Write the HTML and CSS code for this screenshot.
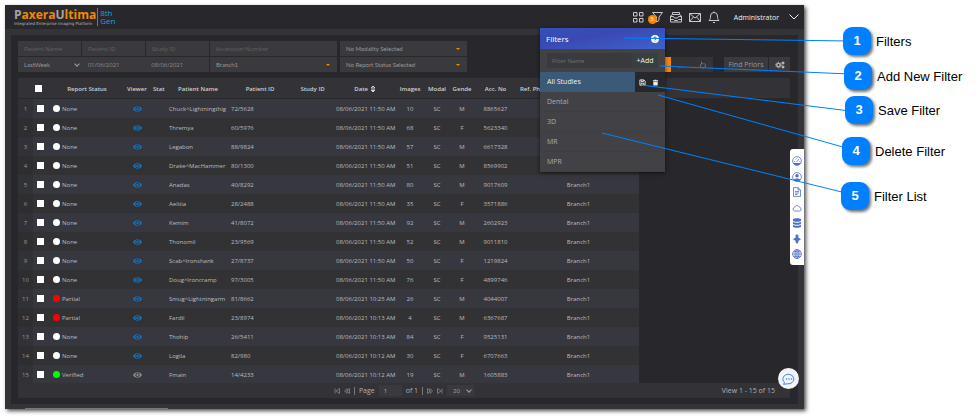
FILE: index.html
```html
<!DOCTYPE html>
<html lang="en">

<head>
  <meta charset="UTF-8">
  <meta name="viewport" content="width=device-width, initial-scale=1.0">
  <title>PaxeraUltima - Filters</title>

  <link rel="stylesheet" href="styles.css">
</head>

<body>
  <div class="app">
    <header class="topbar">
      <div class="logo">
        <div class="logo-main">
          <div class="logo-name"><i>P</i>axera<i>U</i>ltima</div>
          <div class="logo-sub">Integrated Enterprise Imaging Platform</div>
        </div>
        <div class="logo-gen">8th<br>Gen</div>
      </div>
      <nav class="top-icons">
        <button class="icon-btn" aria-label="Apps"><svg viewBox="0 0 12 12"><path d="M1.500 1.500h3.500v3.500h-3.500zM7.500 1.500h3.500v3.500h-3.500zM1.500 7.500h3.500v3.500h-3.500zM7.500 7.500h3.500v3.500h-3.500z" /></svg></button>
        <button class="icon-btn" aria-label="Filters"><svg viewBox="0 0 12 12"><path d="M1.500 1.500h10L8 6v3.500L5.500 11V6z" /></svg><span class="badge">5</span></button>
        <button class="icon-btn" aria-label="Worklist"><svg viewBox="0 0 12 12"><path d="M.5 5l2-1.500V1.500h7v2l2 1.500v6H.5zM.5 5.500h3l1 1.500h3l1-1.500h3M.5 8.500h3l1 1h3l1-1h3M2.500 3.500h7" /></svg></button>
        <button class="icon-btn" aria-label="Messages"><svg viewBox="0 0 12 12"><path d="M.5 2.500h11v8H.5zM.5 2.500L6 7l5.500-4.500M.5 10.500l4-4.500M11.500 10.500l-4-4.500" /></svg></button>
        <button class="icon-btn" aria-label="Notifications"><svg viewBox="0 0 12 12"><path d="M1 9.500h10C9.500 8 9.500 7 9.500 5a3.500 3.500 0 0 0-7 0C2.500 7 2.500 8 1 9.500zM5 11.500h2M6 .5v1" /></svg></button>
      </nav>
      <button class="user">Administrator
        <svg viewBox="0 0 10 6"><path d="M.5.5L5 5 9.500.5" /></svg>
      </button>
    </header>

    <main class="panel">
      <div class="tools">
        <form class="search">
          <input aria-label="Patient Name" placeholder="Patient Name">
          <input aria-label="Patient ID" placeholder="Patient ID">
          <input aria-label="Study ID" placeholder="Study ID">
          <input aria-label="Accession Number" placeholder="Accession Number">
          <div class="pick wide"><select aria-label="Modality"><option>No Modality Selected</option></select></div>
          <div class="range">
            <div class="pick chevron"><select aria-label="Period"><option>LastWeek</option></select></div>
            <input aria-label="From date" value="01/06/2021">
            <input aria-label="To date" value="08/06/2021">
          </div>
          <div class="pick"><select aria-label="Branch"><option>Branch1</option></select></div>
          <div class="pick wide"><select aria-label="Report status"><option>No Report Status Selected</option></select></div>
        </form>
        <div class="actions">
          <button class="act orange" aria-label="Search"></button>
          <button class="act dim">...</button>
          <button class="act dim" aria-label="Refresh"><svg viewBox="0 0 8 8"><path d="M2.500 2.500a2.500 2.500 0 1 0 3 0M2.500.8v2h2" /></svg></button>
          <button class="act priors">Find Priors</button>
          <button class="act" aria-label="Settings"><svg class="gears" viewBox="0 0 10 8"><circle cx="3.500" cy="4" r="1.700" /><circle class="teeth" cx="3.500" cy="4" r="2.700" /><circle cx="8" cy="2" r="1" /><circle cx="8" cy="6" r="1" /></svg></button>
        </div>
      </div>

      <section class="grid">
        <div class="grid-body">
          <table>
            <colgroup>
              <col class="w-num"><col class="w-check"><col class="w-status"><col class="w-viewer"><col class="w-stat">
              <col class="w-name"><col class="w-pid"><col class="w-sid"><col class="w-date"><col class="w-images">
              <col class="w-modal"><col class="w-gender"><col class="w-acc"><col class="w-ref"><col class="w-branch"><col class="w-last">
            </colgroup>
            <thead>
              <tr>
                <th></th>
                <th><input type="checkbox" aria-label="Select all"></th>
                <th>Report Status</th>
                <th class="cut">Viewer</th>
                <th class="cut">Stat</th>
                <th>Patient Name</th>
                <th>Patient ID</th>
                <th>Study ID</th>
                <th>Date <svg class="sort" viewBox="0 0 6 8"><path d="M1 3l2-2 2 2z" /><path class="on" d="M1 5l2 2 2-2z" /></svg></th>
                <th>Images</th>
                <th>Modal</th>
                <th>Gende</th>
                <th>Acc. No</th>
                <th class="cut">Ref. Phys</th>
                <th></th>
                <th></th>
              </tr>
            </thead>
            <tbody id="rows"></tbody>
          </table>
        </div>
        <footer class="pager">
          <div class="pages">
            <button aria-label="First page"><svg viewBox="0 0 6 6"><path d="M1 .5v5M5.500.5L2 3l3.500 2.500z" /></svg></button>
            <button aria-label="Previous page"><svg viewBox="0 0 6 6"><path d="M3 .5L.5 3 3 5.500zM5.500.5L3 3l2.500 2.500z" /></svg></button>
            <span class="bar"></span>
            <label for="page">Page</label>
            <input id="page" value="1">
            <span>of 1</span>
            <span class="bar"></span>
            <button aria-label="Next page"><svg viewBox="0 0 6 6"><path d="M.5.5L3 3 .5 5.500zM3 .5L5.500 3 3 5.500z" /></svg></button>
            <button aria-label="Last page"><svg viewBox="0 0 6 6"><path d="M5 .5v5M.5.5L4 3 .5 5.500z" /></svg></button>
            <div class="pick chevron size"><select aria-label="Rows per page"><option>20</option></select></div>
          </div>
          <div class="view">View 1 - 15 of 15</div>
        </footer>
      </section>
    </main>
    <div class="scroll"></div>

    <aside class="filters">
      <div class="filters-head">
        <h2>Filters</h2>
        <button aria-label="Help"><svg viewBox="0 0 8 8"><circle cx="4" cy="4" r="4" /><path d="M2.800 3.200a1.200 1.200 0 1 1 1.600 1.100L4 5M4 5.700v.8" /></svg></button>
      </div>
      <div class="filters-add">
        <input aria-label="Filter Name" placeholder="Filter Name">
        <button>+Add</button>
      </div>
      <ul>
        <li class="active">
          <a href="#">All Studies</a>
          <button aria-label="Save"><svg viewBox="0 0 8 8"><path d="M1.500 1h4L7 2.500V7H1V1zM2.500 1v2h2.500V1M2.500 7V4.800h3V7" /></svg></button>
          <button aria-label="Delete"><svg viewBox="0 0 8 8"><path class="fill" d="M1.500 3h5v4.500h-5zM1 1.500h6v1H1zM3 .8h2v1H3z" /></svg></button>
        </li>
        <li><a href="#">Dental</a></li>
        <li><a href="#">3D</a></li>
        <li><a href="#">MR</a></li>
        <li><a href="#">MPR</a></li>
      </ul>
    </aside>

    <nav class="side">
      <button aria-label="Dashboard"><svg viewBox="0 0 10 10"><circle cx="5" cy="5" r="4.400" /><path class="fill" d="M1 7h8A4.500 4.500 0 0 1 1 7z" /><path d="M4.500 6L7 3M2 5.500h.8M3 3l.5.5M5 2v.8M7.500 5.500h.8" /></svg></button>
      <button aria-label="Profile"><svg viewBox="0 0 10 10"><circle cx="5" cy="5" r="4.400" /><circle class="fill" cx="5" cy="3.800" r="1.700" /><path class="fill" d="M1.700 8C2.500 6 7.500 6 8.300 8 6.500 9.800 3.500 9.800 1.700 8z" /></svg></button>
      <button aria-label="Report"><svg viewBox="0 0 10 10"><path d="M1.500.6h4.500L8.500 3v6.400h-7zM6 .6V3h2.500M3 4.500h4M3 6h4M3 7.500h2.500" /></svg></button>
      <button aria-label="Cloud"><svg viewBox="0 0 10 10"><path d="M2.500 8a1.800 1.800 0 0 1 0-3.500 2.600 2.600 0 0 1 5-.2A1.900 1.900 0 0 1 7.800 8z" /></svg></button>
      <button aria-label="Storage"><svg viewBox="0 0 10 10"><path class="fill" d="M1 1C2 0 8 0 9 1v2C8 4 2 4 1 3zM1 4c1.500 1 6.500 1 8 0v2C8 7 2 7 1 6zM1 7c1.500 1 6.500 1 8 0v2c-1 1-7 1-8 0z" /></svg></button>
      <button aria-label="Routing"><svg viewBox="0 0 10 10"><path class="fill" d="M5 0l1.800 2L6 3.200 9 5.200 6.200 7 6.500 8 5 10 3.500 8l.3-1L1 5.200l3-2L3.200 2z" /></svg></button>
      <button aria-label="Language"><svg viewBox="0 0 10 10"><circle cx="5" cy="5" r="4.400" /><ellipse cx="5" cy="5" rx="2" ry="4.400" /><path d="M5 .6v8.800M.6 5h8.800M1.300 2.700h7.400M1.300 7.300h7.400" /></svg></button>
    </nav>

    <button class="chat" aria-label="Chat"><svg viewBox="0 0 14 12"><path d="M2.500 9.500A5.500 4.800 0 1 1 5.500 10.800L1.500 11.300z" /><circle cx="4.500" cy="6" r=".8" /><circle cx="7" cy="6" r=".8" /><circle cx="9.500" cy="6" r=".8" /></svg></button>
  </div>

  <div class="callouts">
    <svg class="lines" viewBox="0 0 978 418">
      <path d="M624 38L850 41M660 66L850 74M641 85L850 111M658 95L850 149M602 133L850 194" />
    </svg>
    <div class="callout c1"><b>1</b>Filters</div>
    <div class="callout c2"><b>2</b>Add New Filter</div>
    <div class="callout c3"><b>3</b>Save Filter</div>
    <div class="callout c4"><b>4</b>Delete Filter</div>
    <div class="callout c5"><b>5</b>Filter List</div>
  </div>

  <script src="rows.js"></script>
</body>

</html>
```

FILE: styles.css
```css
* {
  box-sizing: border-box;
}

body {
  position: relative;
  margin: 0;
  height: 100vh;
  padding: 5px 174px 9px 5px;
  background-color: #fff;
  font-family: "Open Sans", "Noto Sans", sans-serif;
  font-size: 6px;
  color: #bcbcbe;
  overflow: hidden;
}

button,
input,
select {
  margin: 0;
  padding: 0;
  border: 0;
  border-radius: 0;
  background: none;
  color: inherit;
  font: inherit;
}

button {
  display: flex;
  align-items: center;
  justify-content: center;
}

svg {
  display: block;
  fill: none;
  stroke: currentColor;
}

/* window */
.app {
  position: relative;
  display: flex;
  flex-direction: column;
  height: 100%;
  background-color: #333338;
  box-shadow: 2px 2px 4px rgba(0, 0, 0, 0.7);
}

.topbar {
  display: flex;
  align-items: center;
  height: 24px;
  padding: 0 5px 0 9px;
  background-color: #28282c;
}

.logo {
  display: flex;
  align-items: center;
  margin-right: auto;
}

.logo-main {
  padding-right: 1px;
  border-right: 1px solid #777;
}

.logo-name {
  font-size: 12px;
  font-weight: 700;
  line-height: 13px;
  color: #f08a00;
}

.logo-name i {
  font-style: normal;
  color: #a5a5a8;
}

.logo-sub {
  font-family: "DejaVu Sans", sans-serif;
  font-size: 4px;
  line-height: 5px;
  color: #b8b8b8;
}

.logo-gen {
  padding-left: 2px;
  font-size: 8px;
  line-height: 8px;
  color: #0aa5e8;
}

.top-icons {
  display: flex;
  gap: 7px;
  color: #c8c8ca;
}

.icon-btn {
  position: relative;
  width: 12px;
  height: 12px;
}

.icon-btn svg {
  width: 12px;
  height: 12px;
}

.badge {
  position: absolute;
  left: -3px;
  top: 4px;
  width: 9px;
  height: 9px;
  border-radius: 50%;
  background-color: #ff8400;
  color: #fff;
  line-height: 9px;
}

.user {
  gap: 10px;
  margin-left: 14px;
  font-size: 7px;
  color: #f0f0f0;
}

.user svg {
  width: 10px;
  height: 6px;
}

/* content */
.panel {
  flex: 1;
  display: flex;
  flex-direction: column;
  gap: 6px;
  min-height: 0;
  margin: 6px 6px 5px;
  padding: 6px 8px 6px 7px;
  background-color: #28282c;
}

.tools {
  display: flex;
  justify-content: space-between;
  align-items: flex-end;
}

.search {
  display: grid;
  grid-template-columns: 63px 63px 63px 127px 129px;
  grid-auto-rows: 15px;
  gap: 1px;
}

.search > * {
  background-color: #3a3a3e;
}

.search input {
  min-width: 0;
  padding-left: 6px;
  color: #8a8a8d;
}

.search input::placeholder {
  color: #626266;
}

.wide {
  margin-left: 2px;
}

.range {
  grid-column: span 3;
  display: grid;
  grid-template-columns: 1fr 1fr 1fr;
}

.pick {
  position: relative;
}

.pick select {
  width: 100%;
  height: 100%;
  padding-left: 6px;
  appearance: none;
  font-family: Lato, sans-serif;
  color: #98989b;
}

.pick::after {
  content: "";
  position: absolute;
  right: 7px;
  top: 7px;
  border: 2px solid transparent;
  border-top-color: #f08a00;
}

.chevron::after {
  right: 3px;
  top: 5px;
  width: 3px;
  height: 3px;
  border: 0;
  border-right: 1px solid #a0a0a0;
  border-bottom: 1px solid #a0a0a0;
  transform: rotate(45deg);
}

.actions {
  display: flex;
}

.act {
  width: 21px;
  height: 15px;
  background-color: #3a3a3e;
  color: #ddd;
}

.act svg {
  width: 8px;
  height: 8px;
}

.act .gears {
  width: 10px;
}

.teeth {
  stroke-dasharray: 1 1;
}

.orange {
  background-color: #ff8400;
}

.dim {
  background-color: #343438;
  font-size: 8px;
  color: #77777a;
}

.priors {
  width: 44px;
  margin: 0 1px 0 11px;
  font-size: 7px;
  color: #98989b;
}

/* studies */
.grid {
  flex: 1;
  display: flex;
  flex-direction: column;
  min-height: 0;
}

.grid-body {
  flex: 1;
  min-height: 0;
  overflow: hidden;
  background: linear-gradient(#333337 20px, transparent 20px);
}

table {
  width: 621px;
  table-layout: fixed;
  border-collapse: collapse;
}

.w-num { width: 15px; }
.w-check { width: 17px; }
.w-status { width: 74px; }
.w-viewer { width: 26px; }
.w-stat { width: 17px; }
.w-name { width: 62px; }
.w-pid { width: 62px; }
.w-sid { width: 43px; }
.w-date { width: 62px; }
.w-images { width: 28px; }
.w-modal { width: 26px; }
.w-gender { width: 24px; }
.w-acc { width: 43px; }
.w-ref { width: 43px; }
.w-branch { width: 37px; }

th,
td {
  height: 19px;
  padding: 0 2px;
  overflow: hidden;
  text-align: center;
  white-space: nowrap;
  line-height: 10px;
}

th {
  height: 21px;
  padding: 0;
  font-weight: 600;
  color: #d0d0d2;
}

.cut {
  padding-left: 3px;
  text-align: left;
}

tbody tr {
  background-color: #323234;
}

tbody tr:nth-child(odd) {
  background-color: #373740;
}

tbody td:first-child {
  background-color: rgba(40, 40, 44, 0.4);
  color: #98989b;
}

td.left {
  text-align: left;
}

input[type="checkbox"] {
  display: block;
  appearance: none;
  width: 7px;
  height: 7px;
  margin-left: 2px;
  background-color: #fff;
}

.status {
  display: flex;
  align-items: center;
  gap: 2px;
  padding-left: 1px;
}

.dot {
  width: 7px;
  height: 7px;
  border-radius: 50%;
  background-color: #fff;
}

.Partial .dot { background-color: #f00; }
.Verified .dot { background-color: #0f0; }

.eye {
  width: 9px;
  height: 6px;
  margin: 0 auto;
  color: #1273c4;
}

.eye .iris {
  stroke: #323238;
}

.Verified .eye {
  color: #8d8d90;
}

.sort {
  display: inline-block;
  width: 6px;
  height: 8px;
  vertical-align: middle;
}

.sort .on {
  fill: currentColor;
}

/* pager */
.pager {
  display: grid;
  grid-template-columns: 1fr auto 1fr;
  align-items: center;
  height: 15px;
  background-color: #333337;
  font-size: 7px;
  color: #b0b0b2;
}

.pages {
  grid-column: 2;
  display: flex;
  align-items: center;
  gap: 4px;
}

.pages svg {
  width: 6px;
  height: 6px;
  color: #77777a;
}

.bar {
  width: 1px;
  height: 8px;
  background-color: #77777a;
}

.pages input {
  width: 23px;
  height: 11px;
  padding-left: 5px;
  background-color: #3a3a3e;
  font-size: 6px;
}

.size {
  width: 27px;
  height: 11px;
  background-color: #3a3a3e;
  font-size: 6px;
}

.size::after {
  top: 3px;
}

.view {
  justify-self: end;
  padding-right: 15px;
}

.scroll {
  position: absolute;
  left: 20px;
  bottom: 0;
  width: 143px;
  height: 1px;
  background-color: #77777a;
}

/* filters menu */
.filters {
  position: absolute;
  top: 23px;
  right: 139px;
  width: 125px;
  background-color: #424246;
  box-shadow: 0 1px 4px rgba(0, 0, 0, 0.6);
  font-size: 7px;
}

.filters-head {
  display: flex;
  justify-content: space-between;
  align-items: center;
  height: 21px;
  padding: 0 6px;
  background: linear-gradient(170deg, #3450b8, #3a49b4 40%, #3f62cc);
  color: #fff;
}

.filters-head h2 {
  margin: 0;
  font-size: 8px;
  font-weight: 400;
}

.filters-head svg {
  width: 8px;
  height: 8px;
  fill: #fff;
  stroke: none;
}

.filters-head path {
  fill: none;
  stroke: #3a49b4;
}

.filters-add {
  display: flex;
  margin: 4px 7px;
  height: 15px;
  background-color: #3a3a3d;
}

.filters-add input {
  flex: 1;
  min-width: 0;
  padding-left: 5px;
  font-size: 6px;
}

.filters-add input::placeholder {
  color: #707074;
}

.filters-add button {
  width: 26px;
  background-color: #38403f;
  color: #f0f0f0;
}

.filters ul {
  margin: 0;
  padding: 0;
  list-style: none;
}

.filters li {
  display: flex;
  height: 20px;
  border-bottom: 1px solid #3e3e42;
}

.filters li a {
  flex: 1;
  padding-left: 7px;
  line-height: 20px;
  color: #acacae;
  text-decoration: none;
}

.filters .active {
  padding-right: 3px;
  border: 0;
  background-color: #28282c;
}

.filters .active a {
  margin-right: 1px;
  background-color: #3a5a78;
  color: #f0f0f0;
}

.filters li button {
  width: 13px;
  color: #eee;
}

.filters li svg {
  width: 7px;
  height: 7px;
}

.fill {
  fill: currentColor;
  stroke: none;
}

/* right side */
.side {
  position: absolute;
  top: 144px;
  right: 0;
  display: flex;
  flex-direction: column;
  justify-content: space-between;
  width: 14px;
  height: 116px;
  padding: 7px 2px 6px;
  border-radius: 3px 0 0 3px;
  background-color: #fff;
  color: #4f6fca;
}

.side svg {
  width: 10px;
  height: 10px;
  stroke-width: 0.8;
}

.chat {
  position: absolute;
  right: 5px;
  bottom: 20px;
  width: 21px;
  height: 21px;
  border-radius: 50%;
  background-color: #f4f4f6;
  color: #3f86f0;
}

.chat svg {
  width: 14px;
  height: 12px;
}

.chat circle {
  fill: currentColor;
  stroke: none;
}

/* numbered notes */
.callouts {
  position: absolute;
  top: 0;
  right: 0;
  width: 978px;
  height: 418px;
  pointer-events: none;
  font-family: "Liberation Sans", Arial, sans-serif;
  font-size: 13px;
  color: #000;
}

.lines {
  stroke: #0080ff;
}

.callout {
  position: absolute;
  display: flex;
  align-items: center;
  gap: 5px;
}

.callout b {
  width: 28px;
  height: 28px;
  border-radius: 9px;
  background-color: #0080ff;
  box-shadow: 2px 2px 3px rgba(0, 0, 0, 0.55);
  color: #fff;
  line-height: 28px;
  text-align: center;
}

.c1 { left: 843px; top: 27px; }
.c2 { left: 844px; top: 62px; }
.c3 { left: 845px; top: 96px; }
.c4 { left: 842px; top: 137px; }
.c5 { left: 841px; top: 182px; }
```

FILE: rows.js
```js
const studies = [
  ["None", "Chuck^Lightningthig", "72/5628", "11:50", 10, "M", "8865627"],
  ["None", "Thremya", "60/5976", "11:50", 68, "F", "5623340"],
  ["None", "Legabon", "88/9824", "11:50", 57, "M", "6617328"],
  ["None", "Drake^MacHammer", "80/1300", "11:50", 51, "M", "8569902"],
  ["None", "Anadas", "40/8292", "11:50", 80, "M", "9017609"],
  ["None", "Aelitia", "28/2488", "11:50", 35, "F", "3571886"],
  ["None", "Kemim", "41/8072", "11:50", 92, "M", "2602923"],
  ["None", "Thonomil", "23/9569", "11:50", 52, "M", "9011810"],
  ["None", "Scab^Ironshank", "27/8737", "11:50", 50, "F", "1219824"],
  ["None", "Doug^Ironcramp", "97/3005", "11:50", 76, "F", "4899746"],
  ["Partial", "Smug^Lightningarm", "81/8662", "10:25", 26, "M", "4044007"],
  ["Partial", "Fardil", "23/8974", "10:13", 4, "M", "6367687"],
  ["None", "Thohip", "26/5411", "10:13", 84, "F", "9525131"],
  ["None", "Logila", "82/980", "10:12", 30, "F", "6707663"],
  ["Verified", "Fmain", "14/4233", "10:12", 19, "M", "1605883"]
];

const eye = '<svg class="eye" viewBox="0 0 9 6"><path class="fill" d="M0 3C2-.7 7-.7 9 3 7 6.700 2 6.700 0 3z" /><circle class="iris" cx="4.500" cy="3" r="1.700" /></svg>';

document.getElementById("rows").innerHTML = studies.map((s, i) => `
  <tr class="${s[0]}">
    <td>${i + 1}</td>
    <td><input type="checkbox" aria-label="Select ${s[1]}"></td>
    <td><div class="status"><span class="dot"></span>${s[0]}</div></td>
    <td>${eye}</td>
    <td></td>
    <td class="left">${s[1]}</td>
    <td class="left">${s[2]}</td>
    <td></td>
    <td class="left">08/06/2021 ${s[3]} AM</td>
    <td>${s[4]}</td>
    <td>SC</td>
    <td>${s[5]}</td>
    <td>${s[6]}</td>
    <td></td>
    <td>Branch1</td>
    <td></td>
  </tr>`).join("");
```
